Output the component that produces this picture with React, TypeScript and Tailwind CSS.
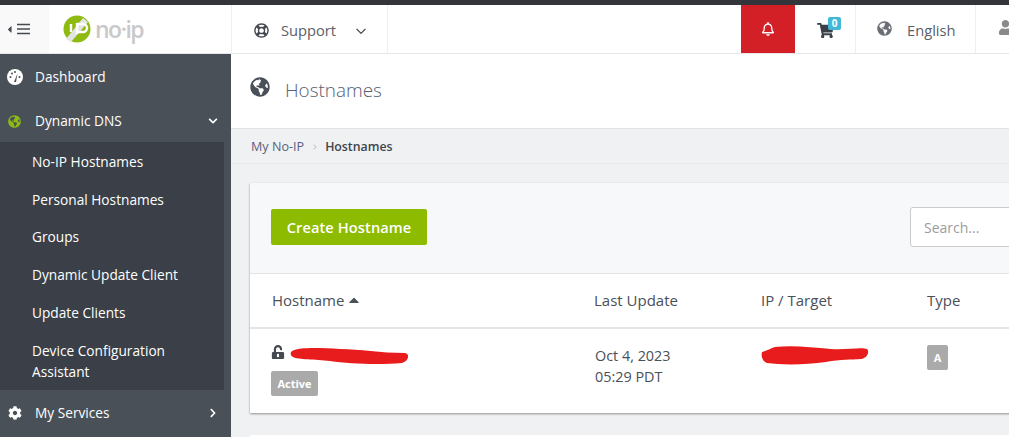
import { FaCaretLeft, FaCaretUp, FaChevronDown, FaChevronRight, FaCog, FaGlobeAmericas, FaRegBell, FaRegLifeRing, FaShoppingCart, FaUnlockAlt, FaUser } from "react-icons/fa";
import { HiOutlineChevronDown } from "react-icons/hi";

const subItems = ["No-IP Hostnames", "Personal Hostnames", "Groups", "Dynamic Update Client", "Update Clients"];

function Logo() {
  return (
    <div className="flex items-center gap-[4px] ml-[14px]">
      <svg width="28" height="28" viewBox="0 0 28 28">
        <circle cx="14" cy="14" r="13.5" fill="#8dbb12" />
        <path d="M3 24 L20 3 L25 7 L8 27 Z" fill="#e4e4e4" />
        <path d="M8 9 v8 M14 8 v11 M14 9 h6 a3 3 0 0 1 0 8 h-6" stroke="#fff" strokeWidth="2.4" fill="none" />
      </svg>
      <span className="text-[23px] font-semibold tracking-[-1.5px] text-[#c9c9c9] leading-none">no·ip</span>
    </div>
  );
}

function DashIcon() {
  return (
    <svg width="16" height="16" viewBox="0 0 16 16">
      <circle cx="8" cy="8" r="8" fill="#fff" />
      <path d="M7 13 L10.5 4.5 L9 13 Z" fill="#4a5058" />
      <circle cx="3.5" cy="8" r="1" fill="#4a5058" />
      <circle cx="5" cy="4.5" r="1" fill="#4a5058" />
      <circle cx="8" cy="3" r="1" fill="#4a5058" />
      <circle cx="12.5" cy="8" r="1" fill="#4a5058" />
    </svg>
  );
}

function Header() {
  return (
    <header className="flex h-[49px] bg-white border-b border-[#e6e7e9] text-[#5b6068]">
      <div className="w-[49px] bg-[#f9f9f9] flex items-center pl-[4px] text-[#454a52] gap-[1px]">
        <FaCaretLeft className="text-[11px]" />
        <svg width="14" height="12" viewBox="0 0 14 12">
          <path d="M1 1.5h13M1 6h13M1 10.5h13" stroke="#454a52" strokeWidth="1.6" />
        </svg>
      </div>
      <div className="w-[182px] flex items-center">
        <Logo />
      </div>
      <div className="w-[157px] border-x border-[#eeeff0] flex items-center pl-[22px] pt-[2px] text-[14.7px]">
        <FaRegLifeRing className="text-[15px] text-[#454a52]" />
        <span className="ml-[12px]">Support</span>
        <HiOutlineChevronDown className="ml-[18px] text-[14px] mt-[2px] text-[#454a52]" />
      </div>
      <div className="flex-1" />
      <div className="w-[54px] bg-[#d32027] flex items-center justify-center text-white">
        <FaRegBell className="text-[14px]" />
      </div>
      <div className="w-[61px] border-r border-[#eeeff0] flex items-center justify-center relative">
        <FaShoppingCart className="text-[17px] text-[#3a3f48] mt-[3px]" />
        <span className="absolute left-[33px] top-[12px] w-[13px] h-[13px] rounded-[2px] bg-[#41b8d8] text-white text-[10px] font-bold leading-[13px] text-center">0</span>
      </div>
      <div className="w-[120px] border-r border-[#eeeff0] flex items-center pl-[21px] pt-[2px] text-[14.7px]">
        <FaGlobeAmericas className="text-[15px] text-[#6a6e75] mb-[4px]" />
        <span className="ml-[15px]">English</span>
      </div>
      <div className="flex-1 max-w-[33px] flex items-center pl-[22px]">
        <FaUser className="text-[15px] text-[#8a8a8a] shrink-0 mb-[4px]" />
      </div>
    </header>
  );
}

function SideItem({ icon, label, chevron, className }: { icon: React.ReactNode; label: string; chevron?: React.ReactNode; className: string }) {
  return (
    <div className={"flex items-center pl-[7px] pr-[13px] text-white text-[13.7px] " + className}>
      <span className="w-[28px] shrink-0 flex">{icon}</span>
      <span>{label}</span>
      <span className="ml-auto">{chevron}</span>
    </div>
  );
}

function Sidebar() {
  return (
    <aside className="w-[231px] shrink-0 bg-[#4a5058]">
      <SideItem className="h-[44px] pt-[2px]" icon={<DashIcon />} label="Dashboard" />
      <SideItem className="h-[44px] pt-[2px]" icon={<FaGlobeAmericas className="text-[13px] ml-[1px] text-[#8dbb12]" />} label="Dynamic DNS" chevron={<FaChevronDown className="text-[10px]" />} />
      <div className="w-[224px] h-[248px] bg-[#3a3f48] pl-[32px] pt-[1.5px] text-white text-[13.7px]">
        {subItems.map((item) => (
          <div key={item} className="h-[37.7px] flex items-center">
            {item}
          </div>
        ))}
        <div className="leading-[21px] pt-[8px]">
          Device Configuration
          <br />
          Assistant
        </div>
      </div>
      <SideItem className="h-[45px] pt-[1px]" icon={<FaCog className="text-[14px] ml-[1px]" />} label="My Services" chevron={<FaChevronRight className="text-[10px]" />} />
    </aside>
  );
}

function Scribble({ d, w, h }: { d: string; w: number; h: number }) {
  return (
    <svg width={w} height={h} viewBox={`0 0 ${w} ${h}`} className="block">
      <path d={d} fill="#e81c1c" />
    </svg>
  );
}

function HostTable() {
  return (
    <section className="ml-[19px] w-[800px] bg-white shadow-[0_1px_2px_rgba(0,0,0,0.4)]">
      <div className="h-[91px] bg-[#f7f8fa] flex items-center justify-between pl-[21px] pb-[2px] border-b border-[#e3e4e6]">
        <button className="h-[36px] w-[156px] pt-[1px] rounded-[2px] bg-[#8dbb00] text-white text-[14.6px] font-semibold tracking-[0.1px]">Create Hostname</button>
        <div className="h-[40px] w-[140px] bg-white border border-[#c9cbce] rounded-[3px] flex items-center pl-[13px] text-[14px] text-[#9a9da1]">Search...</div>
      </div>
      <div className="grid grid-cols-[323px_167px_166px_1fr] pl-[21px] h-[55px] items-center border-b-2 border-[#e3e4e6] text-[15px] font-medium text-[#4a5058]">
        <div className="flex items-center gap-[2px] pl-[1px]">
          Hostname <FaCaretUp className="text-[16px] mb-[2px]" />
        </div>
        <div>Last Update</div>
        <div>IP / Target</div>
        <div>Type</div>
      </div>
      <div className="grid grid-cols-[323px_167px_166px_1fr] pl-[21px] h-[84px] pt-[15px] text-[14.4px] text-[#4a5058]">
        <div>
          <div className="flex items-center h-[16px]">
            <FaUnlockAlt className="text-[14px] text-[#454a52] mr-[5px]" />
            <div className="mt-[6px]">
              <Scribble w={119} h={19} d="M2 5 C10 1 30 2 50 3 C70 3 90 7 115 7 C120 8 119 15 112 17 C90 19 60 18 40 15 C25 13 8 14 3 11 C0 9 0 7 2 5 Z" />
            </div>
          </div>
          <span className="mt-[11px] inline-block h-[25px] w-[47px] rounded-[2px] bg-[#aaaaaa] text-white text-[11px] font-bold leading-[25px] text-center">Active</span>
        </div>
        <div className="leading-[21px] pt-[1px] pl-[1px]">
          Oct 4, 2023
          <br />
          05:29 PDT
        </div>
        <div>
          <Scribble w={108} h={23} d="M1 8 C8 6 10 4 14 3 C30 1 50 3 70 5 C85 6 100 3 106 5 C109 8 106 14 100 15 C90 16 80 15 65 18 C45 21 20 21 6 19 C1 17 0 12 1 8 Z" />
        </div>
        <div>
          <span className="mt-[1px] block h-[25px] w-[21px] rounded-[2px] bg-[#aaaaaa] text-white text-[11px] font-bold leading-[25px] text-center">A</span>
        </div>
      </div>
    </section>
  );
}

export default function App() {
  return (
    <div className="w-[1009px] h-[437px] overflow-hidden flex flex-col bg-[#f0f1f3] font-['Open_Sans',sans-serif]">
      <div className="h-[5px] bg-[#34353a] shrink-0" />
      <Header />
      <div className="flex flex-1 min-h-0">
        <Sidebar />
        <main className="flex-1 min-w-0">
          <div className="h-[75px] bg-white border-b border-[#e3e4e6] flex items-start pl-[19px] pt-[24px] text-[#4a5058]">
            <FaGlobeAmericas className="text-[20px] mt-[-1px]" />
            <h1 className="ml-[15px] text-[18.9px] font-light leading-[26px] mt-[-1px] text-[#566070]">Hostnames</h1>
          </div>
          <div className="h-[35px] border-b border-[#e6e7e9] flex items-center pl-[20px] pt-[2px] text-[12.6px] text-[#5a5f80]">
            My No-IP
            <FaChevronRight className="ml-[8px] mr-[7px] text-[6px] text-[#c4c6c9]" />
            <span className="font-semibold text-[12.3px] text-[#3f444c]">Hostnames</span>
          </div>
          <div className="pt-[19px]">
            <HostTable />
          </div>
          <div className="ml-[19px] mt-[22px] h-[4px] bg-white" />
        </main>
      </div>
    </div>
  );
}
